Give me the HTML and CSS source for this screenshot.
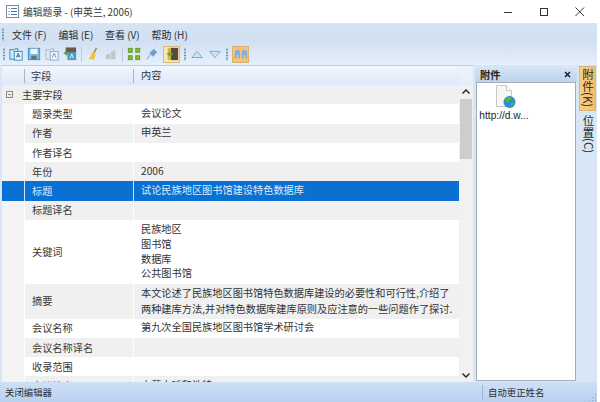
FILE: index.html
```html
<!DOCTYPE html>
<html lang="zh">
<head>
<meta charset="utf-8">
<title>编辑题录</title>
<link rel="stylesheet" href="styles.css">
</head>
<body>
<div class="window">
  <header class="titlebar">
    <svg class="app-icon" width="13" height="13" viewBox="0 0 13 13"><rect x="0.500" y="0.500" width="12" height="12" fill="#fff" stroke="#7d8a99"/><path d="M2.500 3.500h1M2.500 6.500h1M2.500 9.500h1M5 3.500h6M5 6.500h6M5 9.500h6" stroke="#4a76a8"/></svg>
    <span class="title-text">编辑题录 - (申英兰, 2006)</span>
    <div class="win-controls">
      <svg width="12" height="12" viewBox="0 0 12 12"><path d="M2 6.500h8" stroke="#333"/></svg>
      <svg width="12" height="12" viewBox="0 0 12 12"><rect x="2.500" y="2.500" width="7" height="7" fill="none" stroke="#333"/></svg>
      <svg width="12" height="12" viewBox="0 0 12 12"><path d="M1.500 1.500l8.500 8.500M10 1.500l-8.500 8.500" stroke="#333"/></svg>
    </div>
  </header>
  <div class="chrome">
    <nav class="menubar">
      <span class="grip"></span>
      <span class="menu-item">文件 (F)</span>
      <span class="menu-item">编辑 (E)</span>
      <span class="menu-item">查看 (V)</span>
      <span class="menu-item">帮助 (H)</span>
    </nav>
    <div class="toolbar">
      <span class="grip"></span>
      <svg class="tool" viewBox="0 0 16 16"><path d="M1 3h5l1-1h3v12H1z" fill="#cfe6f7" stroke="#2f7fb5"/><rect x="6" y="5" width="9" height="10" fill="#eef7fd" stroke="#2f7fb5"/><path d="M8.500 12l2-5 2 5M9 10.500h3" stroke="#1f5f96" fill="none"/></svg>
      <svg class="tool" viewBox="0 0 16 16"><rect x="1.500" y="1.500" width="13" height="13" fill="#7fbbe0" stroke="#3a8abd"/><rect x="4" y="2" width="8" height="6" fill="#f3f6f9"/><rect x="5" y="10" width="6" height="4.500" fill="#5b7187"/></svg>
      <svg class="tool faded" viewBox="0 0 16 16"><path d="M1 3h5l1-1h3v12H1z" fill="#dfe6ec" stroke="#8fa9bd"/><rect x="6" y="5" width="9" height="10" fill="#f2f6f9" stroke="#5b93bb"/><path d="M8.500 12l2-5 2 5" stroke="#3d7cab" fill="none"/></svg>
      <svg class="tool" viewBox="0 0 16 16"><rect x="3" y="0.500" width="12" height="6" fill="#6b5a4a"/><path d="M0.500 7l4-3v2h2v2h-2v2z" fill="#4aa63c"/><rect x="5" y="6" width="10" height="9" fill="#4a9ccb"/><path d="M8 13l2-5 2 5" stroke="#fff" fill="none"/></svg>
      <span class="sep"></span>
      <svg class="tool" viewBox="0 0 16 16"><path d="M12 1l-3 6" stroke="#a77c32" stroke-width="1.500"/><path d="M7 6l4 2.500-2 6-6-1.500q3-2 4-7z" fill="#f0c23a"/></svg>
      <svg class="tool faded2" viewBox="0 0 16 16"><path d="M2 14V9l5-2v7zM8 14V6l5-3v11z" fill="#b9c0c4"/></svg>
      <span class="sep"></span>
      <svg class="tool" viewBox="0 0 16 16"><g fill="#86bb3a" stroke="#5f9a18"><rect x="1.500" y="1.500" width="4.500" height="4.500"/><rect x="10" y="1.500" width="4.500" height="4.500"/><rect x="1.500" y="10" width="4.500" height="4.500"/><rect x="10" y="10" width="4.500" height="4.500"/></g></svg>
      <svg class="tool" viewBox="0 0 16 16"><path d="M2 14l4-5" stroke="#6b8296"/><path d="M5 7l5-5 4 4-5 5-1-1-2-2z" fill="#6f9fcd"/></svg>
      <span class="tool-on"><svg class="tool" viewBox="0 0 16 16"><rect x="6" y="1" width="9" height="14" fill="#5a4a3c"/><rect x="3" y="1" width="4" height="14" fill="#d9b34a"/><path d="M2 8l4-3v2h3v2h-3v2z" fill="#57ad3c"/></svg></span>
      <span class="grip"></span>
      <svg class="tool" viewBox="0 0 16 16"><path d="M2 12L8 5l6 7z" fill="#cfe3f4" stroke="#6ea4cf"/></svg>
      <svg class="tool" viewBox="0 0 16 16"><path d="M2 5l6 7 6-7z" fill="#cfe3f4" stroke="#6ea4cf"/></svg>
      <span class="grip"></span>
      <span class="tool-on orange"><svg class="tool" viewBox="0 0 16 16"><path d="M1 13V6a3 3 0 0 1 6 0v7H5V9H3v4zM9 13V6a3 3 0 0 1 6 0v7h-2V9h-2v4z" fill="#7fb0dc"/></svg></span>
    </div>
  </div>
  <main class="body">
    <section class="grid-wrap">
      <div class="grid">
        <div class="row head"><span class="ind"></span><span class="field">字段</span><span class="val">内容</span></div>
        <div class="row group"><span class="expander"></span><span class="group-label">主要字段</span></div>
        <div class="row"><span class="ind"></span><span class="field">题录类型</span><span class="val">会议论文</span></div>
        <div class="row alt"><span class="ind"></span><span class="field">作者</span><span class="val">申英兰</span></div>
        <div class="row"><span class="ind"></span><span class="field">作者译名</span><span class="val"></span></div>
        <div class="row alt"><span class="ind"></span><span class="field">年份</span><span class="val">2006</span></div>
        <div class="row selected"><span class="ind"></span><span class="field">标题</span><span class="val">试论民族地区图书馆建设特色数据库</span></div>
        <div class="row alt"><span class="ind"></span><span class="field">标题译名</span><span class="val"></span></div>
        <div class="row tall"><span class="ind"></span><span class="field">关键词</span><span class="val">民族地区<br>图书馆<br>数据库<br>公共图书馆</span></div>
        <div class="row alt abstract"><span class="ind"></span><span class="field">摘要</span><span class="val">本文论述了民族地区图书馆特色数据库建设的必要性和可行性,介绍了<br>两种建库方法,并对特色数据库建库原则及应注意的一些问题作了探讨.</span></div>
        <div class="row"><span class="ind"></span><span class="field">会议名称</span><span class="val">第九次全国民族地区图书馆学术研讨会</span></div>
        <div class="row alt"><span class="ind"></span><span class="field">会议名称译名</span><span class="val"></span></div>
        <div class="row"><span class="ind"></span><span class="field">收录范围</span><span class="val"></span></div>
        <div class="row alt"><span class="ind"></span><span class="field">会议地点</span><span class="val">内蒙古呼和浩特</span></div>
      </div>
      <div class="scrollbar">
        <div class="scroll-head"></div>
        <svg class="arrow" width="14" height="14" viewBox="0 0 14 14"><path d="M3.500 8.500L7 5l3.500 3.500" fill="none" stroke="#222" stroke-width="1.400"/></svg>
        <div class="track"><div class="thumb"></div></div>
        <svg class="arrow" width="14" height="14" viewBox="0 0 14 14"><path d="M3.500 5.500L7 9l3.500-3.500" fill="none" stroke="#222" stroke-width="1.400"/></svg>
      </div>
    </section>
    <aside class="panel">
      <div class="panel-head"><span>附件</span><svg width="7" height="7" viewBox="0 0 7 7"><path d="M1 1l5 5M6 1l-5 5" stroke="#222" stroke-width="1.600"/></svg></div>
      <div class="panel-body">
        <div class="file">
          <svg class="file-icon" width="22" height="25" viewBox="0 0 22 25"><path d="M2.500 1.500h10l5 5v16h-15z" fill="#f6f6f6" stroke="#c8c8c8"/><path d="M12.500 1.500v5h5" fill="#fff" stroke="#c8c8c8"/><circle cx="15.500" cy="18" r="6" fill="#2a8fd0"/><path d="M11 15q3-3 6-2 1 3-2 4-1 3-3 1zM17 19l3-1q-1 4-3 4z" fill="#5cb531"/></svg>
          <span class="file-name">http://d.w...</span>
        </div>
      </div>
    </aside>
    <div class="tabs">
      <div class="tab active">附件(K)</div>
      <div class="tab">位置(C)</div>
    </div>
  </main>
  <footer class="statusbar">
    <span class="status-left">关闭编辑器</span>
    <span class="status-right">自动更正姓名</span>
    <span class="resize-grip"></span>
  </footer>
</div>
</body>
</html>
```

FILE: styles.css
```css
* { box-sizing: border-box; }
html, body { margin: 0; padding: 0; height: 100%; background: #fff; overflow: hidden; }
body { font-family: "Noto Sans CJK SC", "Noto Sans", sans-serif; font-size: 10.2px; color: #333; }
.window { width: 597px; height: 402px; display: flex; flex-direction: column; background: #d9e6f6; }
.titlebar { height: 23px; flex: none; background: #fff; display: flex; align-items: center; padding-left: 6px; }
.app-icon { margin-right: 4px; }
.title-text { font-size: 9.800px; color: #3a3a3a; }
.win-controls { margin-left: auto; display: flex; gap: 24px; padding-right: 11px; }
.chrome { flex: none; height: 42px; background: linear-gradient(#d6e4f4 0, #d1e0f2 45%, #e6f0fb 100%); }
.menubar { height: 20px; display: flex; align-items: center; padding: 2px 0 0 2px; }
.grip + .menu-item { margin-left: 8px; }
.menu-item { width: 46.500px; font-size: 10px; color: #2c2c2c; white-space: nowrap; }
.grip { width: 2px; height: 13px; flex: none; background-image: radial-gradient(#6f8fb3 0.7px, transparent 0.9px); background-size: 2px 3px; }
.toolbar { height: 22px; display: flex; align-items: center; padding-left: 3px; gap: 4px; }
.tool { width: 14px; height: 14px; display: block; flex: none; }
.faded { opacity: .75; }
.faded2 { opacity: .8; }
.sep { width: 1px; height: 15px; background: #b6cae0; flex: none; }
.tool-on { width: 17px; height: 17px; display: flex; align-items: center; justify-content: center; background: #f8e7b4; border: 1px solid #d3bb83; }
.tool-on.orange { background: #f7c271; border-color: #d8b272; }
.body { flex: 1; min-height: 0; display: flex; padding-left: 2px; }
.grid-wrap { width: 471px; flex: none; display: flex; background: #fff; border-top: 1px solid #c4cbd3; }
.grid { flex: 1; min-width: 0; overflow: hidden; }
.row { display: flex; height: 19.300px; align-items: center; background: #fff; }
.row.alt { background: #f0f0f0; }
.ind { width: 23px; height: 100%; flex: none; background: #f3f3f3; border-right: 1px solid #fff; }
.field { width: 109px; height: 100%; flex: none; padding: 0 0 1px 7px; display: flex; align-items: center; border-right: 1px solid #fff; color: #3a3a3a; }
.val { padding: 0 0 1px 7px; line-height: 14.700px; white-space: nowrap; color: #333; }
.abstract .val { line-height: 16px; }
.head { height: 19px; background: linear-gradient(#f2f6fd, #dce8f8); }
.head .ind { background: none; height: 14px; border-right: 1px solid #a9b6c6; }
.head .field { background: none; height: 14px; border-right: 1px solid #a9b6c6; padding-left: 6px; }
.group { background: #f0f0f0; padding-bottom: 1px; }
.expander { width: 7px; height: 7px; margin-left: 4px; border: 1px solid #8a8a8a; background: linear-gradient(#888, #888) center / 3px 1px no-repeat; flex: none; }
.group-label { margin-left: 9px; }
.selected, .selected .ind { background: #0a70d2; }
.selected .ind, .selected .field { border-right-color: #cfe4f8; }
.selected .field, .selected .val { color: #d8ebfb; }
.tall { height: 64px; }
.abstract { height: 34.500px; }
.scrollbar { width: 14px; flex: none; background: #f1f1f1; display: flex; flex-direction: column; align-items: center; }
.scroll-head { width: 100%; height: 19px; flex: none; background: linear-gradient(#eef4fc, #e4edf9); }
.arrow { flex: none; }
.track { flex: 1; width: 100%; padding: 0 1px; }
.thumb { height: 60px; background: #cdcdcd; }
.panel { width: 102px; flex: none; margin-left: 2px; display: flex; flex-direction: column; padding-bottom: 1px; }
.panel-head { height: 17px; flex: none; display: flex; justify-content: space-between; align-items: center; padding: 1px 6px 0 5px; font-weight: 700; color: #222; background: linear-gradient(#d9e7f7, #bcd3ef); }
.panel-body { flex: 1; margin: 0 1px; background: #fff; border: 1px solid #a3acb8; }
.file { width: 54px; display: flex; flex-direction: column; align-items: center; padding-top: 1px; }
.file-icon { margin-left: 1px; }
.file-name { font-family: "Liberation Sans", sans-serif; font-size: 10.200px; margin-top: 1px; color: #222; white-space: nowrap; }
.tabs { width: 18px; flex: none; margin-left: 2px; padding-top: 1px; display: flex; flex-direction: column; gap: 2px; }
.tab { writing-mode: vertical-rl; display: flex; width: 18px; padding: 2px 0 3px; align-items: center; color: #2a2a2a; line-height: 17px; font-size: 11.500px; }
.tab.active { background: linear-gradient(90deg, #f8cd85, #f6bd68); border: 1px solid #d4b681; width: 17px; }
.statusbar { height: 20px; flex: none; display: flex; align-items: center; background: linear-gradient(#cfe0f5, #b9d1ef); font-size: 9.400px; color: #2f2f2f; position: relative; }
.status-left { padding-left: 5px; flex: 1; }
.status-right { width: 115px; height: 14px; display: flex; align-items: center; padding-left: 5px; border-left: 1px solid #9fb4cd; }
.resize-grip { position: absolute; right: 1px; bottom: 1px; width: 8px; height: 8px; background-image: radial-gradient(#8ea6c2 0.7px, transparent 0.9px); background-size: 3px 3px; clip-path: polygon(100% 0, 100% 100%, 0 100%); }
```
